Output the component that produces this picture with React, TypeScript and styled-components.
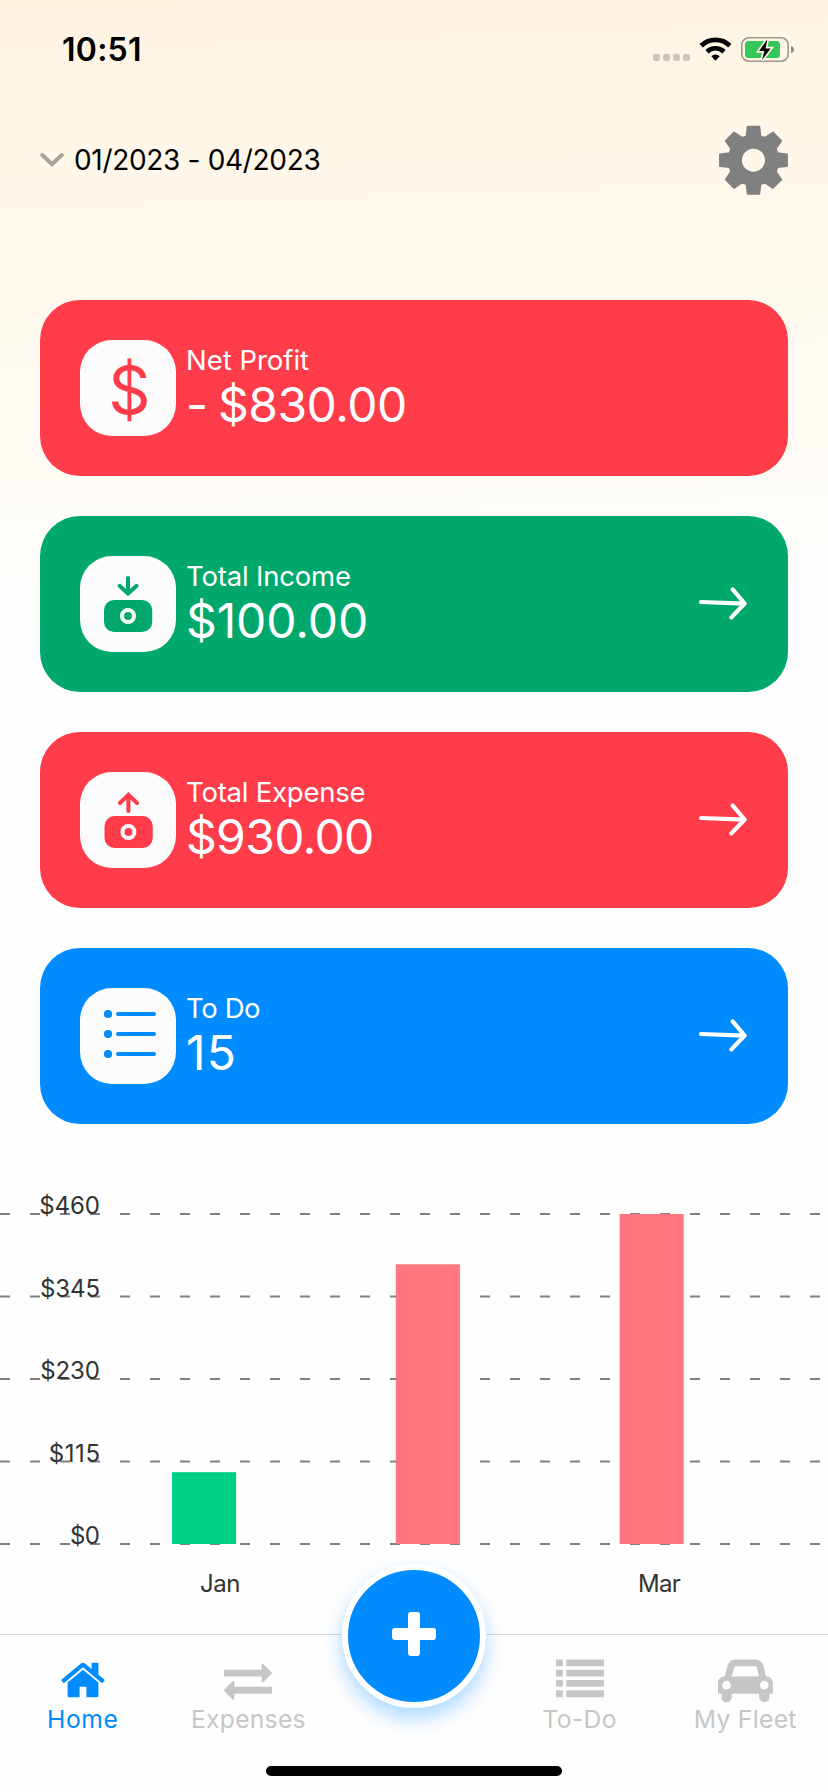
import React from 'react';
import styled, { createGlobalStyle } from 'styled-components';

const GlobalStyle = createGlobalStyle`
  *, *::before, *::after { box-sizing: border-box; }
  body { margin: 0; font-family: Inter, "Liberation Sans", sans-serif; -webkit-font-smoothing: antialiased; }
  svg { display: block; flex: none; }
`;

const RED = '#ff3d4a';
const GREEN = '#00a86b';
const BLUE = '#008cff';
const MUTED = '#c6c6c6';

const Screen = styled.div`
  position: relative;
  display: flex;
  flex-direction: column;
  width: 828px;
  height: 1792px;
  overflow: hidden;
  background: linear-gradient(178deg, #fff4e2 0, #fff8eb 230px, #fffcf6 470px, #fefefe 640px);
`;

const StatusBar = styled.div`
  display: flex;
  align-items: center;
  justify-content: space-between;
  height: 100px;
  padding: 0 33px 0 62px;
`;

const Clock = styled.span`
  font-size: 32px;
  font-weight: 600;
  letter-spacing: 0.26px;
  line-height: 40px;
`;

const Header = styled.header`
  display: flex;
  align-items: center;
  justify-content: space-between;
  height: 120px;
  padding: 0 39px 0 40px;
`;

const Period = styled.button`
  display: flex;
  align-items: center;
  gap: 9px;
  padding: 0;
  border: 0;
  background: none;
  color: #000;
  font: 400 28px/34px Inter, sans-serif;
  letter-spacing: -0.32px;
`;

const CardList = styled.main`
  display: flex;
  flex-direction: column;
  gap: 40px;
  padding: 80px 40px 0;
`;

const Card = styled.section<{ $color: string }>`
  display: flex;
  align-items: center;
  height: 176px;
  padding: 0 40px;
  border-radius: 40px;
  background: ${(p) => p.$color};
  color: #fff;
`;

const Tile = styled.div<{ $color: string }>`
  display: flex;
  width: 96px;
  height: 96px;
  border-radius: 32px;
  background: #fcfcfc;
  color: ${(p) => p.$color};
`;

const DollarSign = styled.span`
  flex: 1;
  padding: 2px 0 0 3px;
  font-size: 66px;
  line-height: 96px;
  text-align: center;
`;

const CardText = styled.div`
  display: flex;
  flex: 1;
  flex-direction: column;
  padding-left: 10px;
`;

const CardLabel = styled.span<{ $tracking: number }>`
  font-size: 27.5px;
  line-height: 34px;
  letter-spacing: ${(p) => p.$tracking}px;
`;

const CardValue = styled.span<{ $tracking: number }>`
  font-size: 48px;
  line-height: 56px;
  letter-spacing: ${(p) => p.$tracking}px;
  word-spacing: -2.5px;
`;

const TabBar = styled.nav`
  position: relative;
  display: grid;
  grid-template-columns: repeat(5, 1fr);
  height: 158px;
  border-top: 1px solid #d5d7d9;
`;

const Tab = styled.div<{ $active?: boolean }>`
  display: flex;
  flex-direction: column;
  align-items: center;
  padding-top: 21px;
  color: ${(p) => (p.$active ? BLUE : MUTED)};
`;

const TabLabel = styled.span<{ $tracking: number }>`
  font-size: 24.7px;
  line-height: 31px;
  letter-spacing: ${(p) => p.$tracking}px;
  white-space: nowrap;
`;

const AddButton = styled.button`
  position: absolute;
  top: -71px;
  left: 342px;
  display: flex;
  align-items: center;
  justify-content: center;
  width: 144px;
  height: 144px;
  padding: 0 0 4px;
  border: 6px solid #fff;
  border-radius: 50%;
  background: ${BLUE};
  box-shadow: 0 10px 20px rgba(0, 140, 255, 0.33);
`;

const HomeIndicator = styled.div`
  position: absolute;
  bottom: 16px;
  left: 266px;
  width: 296px;
  height: 10px;
  border-radius: 5px;
  background: #000;
`;

const StatusIcons = () => (
  <svg width="142" height="26" viewBox="653 37 142 26">
    {[653, 663, 673, 683].map((x) => (
      <rect key={x} x={x} y="54" width="7" height="7" rx="2" fill="#cfc6b8" />
    ))}
    <path d="M701.2 45.7A20.6 20.6 0 0 1 729.8 45.7M707 51.7A12.2 12.2 0 0 1 724 51.7" fill="none" stroke="#000" strokeWidth="4.7" />
    <path d="M711.3 56.2A6 6 0 0 1 719.7 56.2L715.5 60.8Z" fill="#000" />
    <rect x="741.8" y="37.8" width="46.4" height="23.4" rx="7" fill="none" stroke="#9f988d" strokeWidth="1.6" />
    <rect x="745" y="41" width="35" height="17" rx="3.5" fill="#34c759" />
    <path d="M791 46c2 .6 3 2 3 3.6s-1 3-3 3.6z" fill="#8f897f" />
    <path
      d="M767.3 39.5L759 51H764.3L762 60L770.7 48.5H765.6Z"
      fill="#000"
      stroke="#fff5e5"
      strokeWidth="3.4"
      paintOrder="stroke"
    />
  </svg>
);

const ChevronDown = () => (
  <svg width="25" height="26" viewBox="40 147 25 26">
    <path d="M42.3 155L52 164.3L61.8 155" fill="none" stroke="#aaa39a" strokeWidth="4" strokeLinecap="round" />
  </svg>
);

const GEAR_QUARTER = [
  [-5.9, -33.6], [5.9, -33.6], [7, -24], [11.4, -22.4],
  [19.4, -27.8], [27.8, -19.4], [22.4, -11.4], [24, -7],
];
const GEAR_POINTS = [0, 1, 2, 3]
  .flatMap((turn) =>
    GEAR_QUARTER.map(([x, y]) => {
      let p = [x, y];
      for (let i = 0; i < turn; i += 1) p = [-p[1], p[0]];
      return p.join(' ');
    }),
  )
  .join('L');

const Gear = () => (
  <svg width="71" height="70" viewBox="-35.5 -35.2 71 70">
    <path
      d={`M${GEAR_POINTS}ZM12.4 0A12.4 12.4 0 1 0 -12.4 0A12.4 12.4 0 1 0 12.4 0Z`}
      fill="#808080"
      fillRule="evenodd"
      stroke="#808080"
      strokeWidth="1.7"
      strokeLinejoin="round"
    />
  </svg>
);

const MoneyIcon = ({ up }: { up?: boolean }) => (
  <svg width="96" height="96" viewBox="0 0 96 96">
    <path
      d={up ? 'M48.4 39V24M39.9 31L48.4 22.8L57 31' : 'M48 22V37M39.6 29.8L48 37.6L56.6 29.8'}
      fill="none"
      stroke="currentColor"
      strokeWidth="4"
      strokeLinecap="round"
    />
    <rect x={up ? 24.5 : 24} y="44" width="48.2" height="32" rx="10" fill="currentColor" />
    <circle cx={up ? 48.4 : 48} cy="60" r="6" fill="none" stroke="#fcfcfc" strokeWidth="4" />
  </svg>
);

const BulletsIcon = () => (
  <svg width="96" height="96" viewBox="0 0 96 96" fill="currentColor">
    {[26, 46, 66].map((y) => (
      <g key={y}>
        <circle cx="28" cy={y} r="4.1" />
        <rect x="36" y={y - 2} width="40" height="4" rx="2" />
      </g>
    ))}
  </svg>
);

const ArrowRight = () => (
  <svg width="50" height="40" viewBox="698 584 50 40">
    <path
      d="M701 602L744 603.6M732.6 589.4L744.7 603.5L731.4 617.4"
      fill="none"
      stroke="#fff"
      strokeWidth="4.2"
      strokeLinecap="round"
      strokeLinejoin="round"
    />
  </svg>
);

const HOME =
  'M1472 992v480q0 26-19 45t-45 19h-384v-384h-256v384h-384q-26 0-45-19t-19-45v-480q0-1 .5-3t.5-3l575-474 575 474q1 2 1 6zm223-69l-62 74q-8 9-21 11h-3q-13 0-21-7l-692-577-692 577q-12 8-24 7-13-2-21-11l-62-74q-8-10-7-23.5t11-21.5l719-599q32-26 76-26t76 26l244 204v-195q0-14 9-23t23-9h192q14 0 23 9t9 23v408l219 182q10 8 11 21.5t-7 23.5z';
const EXCHANGE =
  'M1792 1184v192q0 13-9.5 22.5t-22.5 9.5h-1376v192q0 13-9.5 22.5t-22.5 9.5q-12 0-24-10l-319-320q-9-9-9-22 0-14 9-23l320-320q9-9 23-9 13 0 22.5 9.5t9.5 22.5v192h1376q13 0 22.5 9.5t9.5 22.5zm0-544q0 14-9 23l-320 320q-9 9-23 9-13 0-22.5-9.5t-9.5-22.5v-192h-1376q-13 0-22.5-9.5t-9.5-22.5v-192q0-13 9.5-22.5t22.5-9.5h1376v-192q0-14 9-23t23-9q12 0 24 10l319 319q9 9 9 23z';
const CAR =
  'M480 1088q0-66-47-113t-113-47-113 47-47 113 47 113 113 47 113-47 47-113zm36-320h1016l-89-357q-2-8-14-17.5t-21-9.5h-768q-9 0-21 9.5t-14 17.5zm1372 320q0-66-47-113t-113-47-113 47-47 113 47 113 113 47 113-47 47-113zm160-96v384q0 14-9 23t-23 9h-96v128q0 80-56 136t-136 56-136-56-56-136v-128h-1024v128q0 80-56 136t-136 56-136-56-56-136v-128h-96q-14 0-23-9t-9-23v-384q0-93 65.5-158.5t158.5-65.5h28l105-419q23-94 104-157.5t179-63.5h768q98 0 179 63.5t104 157.5l105 419h28q93 0 158.5 65.5t65.5 158.5z';

const TabIcon = ({ d, units = 1792 }: { d: string; units?: number }) => (
  <svg width={(units * 48) / 1792} height="48" viewBox={`0 0 ${units} 1792`} fill="currentColor">
    <path d={d} />
  </svg>
);

const ListIcon = () => (
  <svg width="48" height="48" viewBox="0 0 1792 1792" fill="currentColor">
    {[128, 512, 896, 1280].map((y) => (
      <g key={y}>
        <rect x="0" y={y} width="256" height="256" rx="32" />
        <rect x="384" y={y} width="1408" height="256" rx="32" />
      </g>
    ))}
  </svg>
);

const PlusIcon = () => (
  <svg width="44" height="44" viewBox="0 0 44 44" fill="#fff">
    <rect x="0" y="16" width="44" height="12" rx="3" />
    <rect x="16" y="0" width="12" height="44" rx="3" />
  </svg>
);

const ChartText = styled.text`
  font-family: Inter, sans-serif;
  font-size: 24px;
  fill: #333;
`;

const TICKS = [
  { label: '$460', y: 1214, tracking: -0.03 },
  { label: '$345', y: 1296.5, tracking: -0.1 },
  { label: '$230', y: 1379, tracking: -0.1 },
  { label: '$115', y: 1461.5, tracking: 0.6 },
  { label: '$0', y: 1544, tracking: -0.5 },
];
const BARS = [
  { x: 172, top: 1472.2, color: '#00d084' },
  { x: 395.8, top: 1264.3, color: '#ff767f' },
  { x: 619.6, top: 1214, color: '#ff767f' },
];

const Chart = () => (
  <svg width="828" height="510" viewBox="0 1124 828 510">
    {TICKS.map((t) => (
      <line key={t.label} x1="0" x2="828" y1={t.y} y2={t.y} stroke="#808080" strokeWidth="2" strokeDasharray="10 20" />
    ))}
    {BARS.map((b) => (
      <rect key={b.x} x={b.x} y={b.top} width="64.1" height={1544 - b.top} fill={b.color} />
    ))}
    {TICKS.map((t) => (
      <ChartText key={t.label} x={100 + t.tracking} y={t.y + 0.4} textAnchor="end" letterSpacing={t.tracking}>
        {t.label}
      </ChartText>
    ))}
    <ChartText x="200" y="1592.3" letterSpacing="-0.5">Jan</ChartText>
    <ChartText x="638" y="1592.3" letterSpacing="-0.7">Mar</ChartText>
  </svg>
);

export default function App() {
  return (
    <Screen>
      <GlobalStyle />
      <StatusBar>
        <Clock>10:51</Clock>
        <StatusIcons />
      </StatusBar>
      <Header>
        <Period>
          <ChevronDown />
          01/2023 - 04/2023
        </Period>
        <Gear />
      </Header>
      <CardList>
        <Card $color={RED}>
          <Tile $color={RED}><DollarSign>$</DollarSign></Tile>
          <CardText>
            <CardLabel $tracking={-0.02}>Net Profit</CardLabel>
            <CardValue $tracking={-0.52}>- $830.00</CardValue>
          </CardText>
        </Card>
        <Card $color={GREEN}>
          <Tile $color={GREEN}><MoneyIcon /></Tile>
          <CardText>
            <CardLabel $tracking={-0.18}>Total Income</CardLabel>
            <CardValue $tracking={-0.1}>$100.00</CardValue>
          </CardText>
          <ArrowRight />
        </Card>
        <Card $color={RED}>
          <Tile $color={RED}><MoneyIcon up /></Tile>
          <CardText>
            <CardLabel $tracking={-0.22}>Total Expense</CardLabel>
            <CardValue $tracking={-0.68}>$930.00</CardValue>
          </CardText>
          <ArrowRight />
        </Card>
        <Card $color={BLUE}>
          <Tile $color={BLUE}><BulletsIcon /></Tile>
          <CardText>
            <CardLabel $tracking={-0.4}>To Do</CardLabel>
            <CardValue $tracking={1.2}>15</CardValue>
          </CardText>
          <ArrowRight />
        </Card>
      </CardList>
      <Chart />
      <TabBar>
        <Tab $active>
          <TabIcon d={HOME} />
          <TabLabel $tracking={0.6}>Home</TabLabel>
        </Tab>
        <Tab>
          <TabIcon d={EXCHANGE} />
          <TabLabel $tracking={0.25}>Expenses</TabLabel>
        </Tab>
        <span />
        <Tab>
          <ListIcon />
          <TabLabel $tracking={0.35}>To-Do</TabLabel>
        </Tab>
        <Tab>
          <TabIcon d={CAR} units={2048} />
          <TabLabel $tracking={0.3}>My Fleet</TabLabel>
        </Tab>
        <AddButton aria-label="Add">
          <PlusIcon />
        </AddButton>
      </TabBar>
      <HomeIndicator />
    </Screen>
  );
}
